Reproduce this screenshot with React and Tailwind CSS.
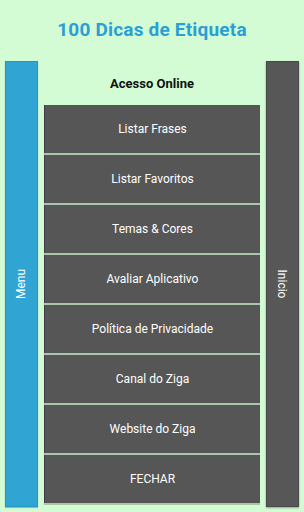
const items = [
  'Listar Frases',
  'Listar Favoritos',
  'Temas & Cores',
  'Avaliar Aplicativo',
  'Política de Privacidade',
  'Canal do Ziga',
  'Website do Ziga',
  'FECHAR',
];

export default function App() {
  return (
    <div
      className="w-[304px] h-[512px] bg-[#d4fcd4] flex flex-col overflow-hidden"
      style={{ fontFamily: 'Roboto, "Liberation Sans", sans-serif' }}
    >
      {/* Title */}
      <div className="h-[61px] flex items-center justify-center pb-[1px]">
        <h1 className="text-[19px] font-bold text-[#2a9fd6] tracking-[0.2px]">100 Dicas de Etiqueta</h1>
      </div>

      <div className="flex px-[5px] gap-[6px]">
        {/* Left drawer handle */}
        <div className="w-[33px] h-[446px] bg-[#30a4d2] border border-[#2497c6] shadow-[0_1px_1px_rgba(0,0,0,0.25)] flex items-center justify-center">
          <span className="-rotate-90 text-white text-[12px] whitespace-nowrap">Menu</span>
        </div>

        {/* Middle list */}
        <div className="w-[216px] flex flex-col">
          <div className="h-[44px] flex items-center justify-center pt-[2px]">
            <span className="text-[13px] font-bold text-[#111]">Acesso Online</span>
          </div>
          <div className="flex flex-col gap-[2px]">
            {items.map((label) => (
              <button
                key={label}
                className="h-[48px] w-full bg-[#565656] border-l border-[#3e3a48] text-white text-[12px] flex items-center justify-center shadow-[0_2px_0_#a9c6a9]"
              >
                {label}
              </button>
            ))}
          </div>
        </div>

        {/* Right drawer handle */}
        <div className="w-[33px] h-[446px] bg-[#575757] border border-[#4a4a4a] shadow-[0_1px_2px_rgba(0,0,0,0.35)] flex items-center justify-center">
          <span className="rotate-90 text-white text-[12px] whitespace-nowrap">Inicio</span>
        </div>
      </div>
    </div>
  );
}
